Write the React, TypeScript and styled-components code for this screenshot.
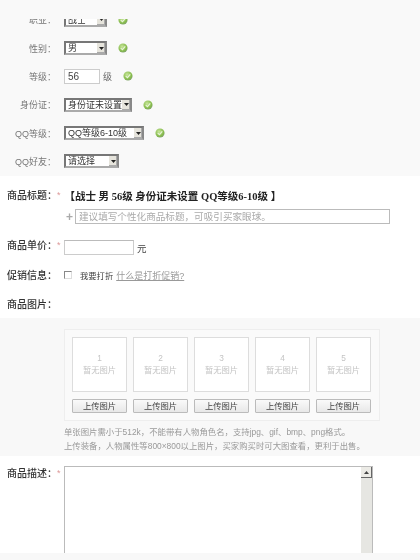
import styled, { createGlobalStyle } from "styled-components";

const GlobalStyle = createGlobalStyle`
    html, body {
        margin: 0;
        padding: 0;
        background: #ffffff;
    }
    body {
        font-family: "Liberation Sans", "Noto Sans CJK SC", sans-serif;
    }
`;

function Check() {
    return (
        <CheckIcon width="10" height="10" viewBox="0 0 11 11">
            <defs>
                <radialGradient id="ok" cx="40%" cy="35%" r="70%">
                    <stop offset="0%" stopColor="#c8e69a" />
                    <stop offset="70%" stopColor="#86bb4c" />
                    <stop offset="100%" stopColor="#7f9f70" />
                </radialGradient>
            </defs>
            <circle cx="5.5" cy="5.5" r="5" fill="url(#ok)" />
            <path d="M3 5.6 L4.9 7.4 L8 3.8" fill="none" stroke="#e8f4d8" strokeWidth="1.3" />
        </CheckIcon>
    );
}

function Select({ width, value }: { width: number; value: string }) {
    return (
        <SelectBox $width={width}>
            <SelectText>{value}</SelectText>
            <SelectArrow>
                <svg width="5" height="3" viewBox="0 0 5 3">
                    <path d="M0 0 H5 L2.5 3 Z" fill="#222" />
                </svg>
            </SelectArrow>
        </SelectBox>
    );
}

const tiles = ["1", "2", "3", "4", "5"];

function App() {
    return (
        <Page>
            <GlobalStyle />
            <TopPanel>
                {/* the first row is cut by the top of the panel in the shot */}
                <ClippedRow>
                    <AttrRow>
                        <AttrLabel>职业：</AttrLabel>
                        <Select width={43} value="战士" />
                        <Check />
                    </AttrRow>
                </ClippedRow>
                <AttrRow>
                    <AttrLabel>性别：</AttrLabel>
                    <Select width={43} value="男" />
                    <Check />
                </AttrRow>
                <AttrRow>
                    <AttrLabel>等级：</AttrLabel>
                    <LevelInput>56</LevelInput>
                    <Unit>级</Unit>
                    <Check />
                </AttrRow>
                <AttrRow>
                    <AttrLabel>身份证：</AttrLabel>
                    <Select width={68} value="身份证未设置" />
                    <Check />
                </AttrRow>
                <AttrRow>
                    <AttrLabel>QQ等级：</AttrLabel>
                    <Select width={80} value="QQ等级6-10级" />
                    <Check />
                </AttrRow>
                <AttrRow>
                    <AttrLabel>QQ好友：</AttrLabel>
                    <Select width={55} value="请选择" />
                </AttrRow>
            </TopPanel>

            <FormPanel>
                <TitleRow>
                    <FieldLabel>商品标题：</FieldLabel>
                    <Star>*</Star>
                    <GoodsTitle>【战士 男 56级 身份证未设置 QQ等级6-10级 】</GoodsTitle>
                </TitleRow>
                <TitleInputRow>
                    <Plus>+</Plus>
                    <TitleInput>建议填写个性化商品标题，可吸引买家眼球。</TitleInput>
                </TitleInputRow>
                <PriceRow>
                    <FieldLabel>商品单价：</FieldLabel>
                    <Star>*</Star>
                    <PriceInput />
                    <Yuan>元</Yuan>
                </PriceRow>
                <PromoRow>
                    <FieldLabel>促销信息：</FieldLabel>
                    <CheckBox />
                    <PromoText>我要打折</PromoText>
                    <PromoLink>什么是打折促销?</PromoLink>
                </PromoRow>
                <PictureRow>
                    <FieldLabel>商品图片：</FieldLabel>
                </PictureRow>
            </FormPanel>

            <PicturePanel>
                <TileBoard>
                    {tiles.map((n) => (
                        <TileColumn key={n}>
                            <Tile>
                                <span>{n}</span>
                                <span>暂无图片</span>
                            </Tile>
                            <UploadButton>上传图片</UploadButton>
                        </TileColumn>
                    ))}
                </TileBoard>
                <Note>单张图片需小于512k，不能带有人物角色名，支持jpg、gif、bmp、png格式。</Note>
                <Note>上传装备，人物属性等800×800以上图片，买家购买时可大图查看，更利于出售。</Note>
            </PicturePanel>

            <DescPanel>
                <DescLabelColumn>
                    <FieldLabel>商品描述：</FieldLabel>
                    <Star>*</Star>
                </DescLabelColumn>
                <DescArea>
                    <ScrollTrack>
                        <ScrollButton>
                            <svg width="5" height="3" viewBox="0 0 5 3">
                                <path d="M0 3 H5 L2.5 0 Z" fill="#444" />
                            </svg>
                        </ScrollButton>
                    </ScrollTrack>
                </DescArea>
            </DescPanel>
            <BottomStrip />
        </Page>
    );
}

const Page = styled.div`
    width: 420px;
    height: 560px;
    overflow: hidden;
    display: flex;
    flex-direction: column;
    filter: blur(0.5px);
`;

const TopPanel = styled.div`
    height: 176px;
    flex: none;
    background: #f9f9f9;
    overflow: hidden;
    display: flex;
    flex-direction: column;
    padding-top: 19px;
    box-sizing: border-box;
`;

const ClippedRow = styled.div`
    flex: none;
    height: 15px;
    overflow: hidden;
    display: flex;
    flex-direction: column;
    justify-content: flex-end;
`;

const AttrRow = styled.div`
    flex: none;
    height: 28.3px;
    display: flex;
    align-items: center;
`;

const AttrLabel = styled.div`
    width: 56px;
    margin-right: 8px;
    text-align: right;
    font-size: 9px;
    color: #777;
    white-space: nowrap;
`;

const SelectBox = styled.div<{ $width: number }>`
    width: ${(p) => p.$width}px;
    height: 14px;
    box-sizing: border-box;
    border: 2px solid #777;
    border-right-color: #888;
    border-bottom-color: #aaa;
    background: #fff;
    display: flex;
    align-items: center;
    justify-content: space-between;
`;

const SelectText = styled.span`
    font-size: 9px;
    line-height: 10px;
    color: #333;
    padding-left: 2px;
    white-space: nowrap;
    overflow: hidden;
`;

const SelectArrow = styled.span`
    flex: none;
    width: 8px;
    height: 10px;
    background: #e6e4dc;
    display: flex;
    align-items: center;
    justify-content: center;
    box-shadow: inset -1px -1px 0 #aaa;
`;

const CheckIcon = styled.svg`
    margin-left: 11px;
    flex: none;
`;

const LevelInput = styled.div`
    width: 36px;
    height: 15px;
    box-sizing: border-box;
    border: 1px solid #ccc;
    background: #fff;
    font-size: 10px;
    line-height: 13px;
    color: #444;
    padding-left: 3px;
`;

const Unit = styled.span`
    font-size: 9px;
    color: #666;
    margin-left: 3px;
`;

const FormPanel = styled.div`
    height: 142px;
    flex: none;
    background: #fff;
    padding-left: 7px;
    box-sizing: border-box;
    padding-top: 12px;
    display: flex;
    flex-direction: column;
`;

const TitleRow = styled.div`
    height: 15px;
    display: flex;
    align-items: center;
`;

const FieldLabel = styled.span`
    flex: none;
    width: 50px;
    font-size: 10px;
    line-height: 11px;
    font-weight: 500;
    color: #333;
    white-space: nowrap;
`;

const Star = styled.span`
    flex: none;
    width: 7px;
    font-size: 9px;
    line-height: 11px;
    color: #d99;
`;

const GoodsTitle = styled.span`
    font-family: "Liberation Serif", "Noto Sans CJK SC", serif;
    font-size: 10.5px;
    font-weight: 700;
    color: #222;
    margin-left: 0.5px;
    white-space: nowrap;
`;

const TitleInputRow = styled.div`
    margin-top: 6px;
    padding-left: 59px;
    display: flex;
    align-items: center;
    height: 15px;
`;

const Plus = styled.span`
    width: 9px;
    font-size: 12px;
    font-weight: 700;
    color: #aaa;
`;

const TitleInput = styled.div`
    width: 315px;
    height: 15px;
    box-sizing: border-box;
    border: 1px solid #bbb;
    font-size: 9.6px;
    line-height: 13px;
    color: #aaa;
    padding-left: 3px;
    white-space: nowrap;
`;

const PriceRow = styled.div`
    margin-top: 16px;
    height: 15px;
    display: flex;
    align-items: flex-start;
`;

const PriceInput = styled.div`
    width: 70px;
    height: 15px;
    box-sizing: border-box;
    border: 1px solid #ccc;
    border-top-color: #bbb;
    background: #fff;
`;

const Yuan = styled.span`
    margin-left: 3px;
    align-self: center;
    font-size: 9.5px;
    color: #444;
`;

const PromoRow = styled.div`
    margin-top: 13px;
    height: 14px;
    display: flex;
    align-items: center;
`;

const CheckBox = styled.span`
    flex: none;
    width: 8px;
    height: 8px;
    margin-left: 7px;
    border: 1px solid #888;
    border-right-color: #ddd;
    border-bottom-color: #ddd;
    box-sizing: border-box;
    background: #fff;
`;

const PromoText = styled.span`
    margin-left: 8px;
    font-size: 8.3px;
    color: #444;
`;

const PromoLink = styled.span`
    margin-left: 3px;
    font-size: 9px;
    color: #999;
    text-decoration: underline;
`;

const PictureRow = styled.div`
    margin-top: 15px;
    height: 15px;
    display: flex;
    align-items: center;
`;

const PicturePanel = styled.div`
    height: 138px;
    flex: none;
    background: #f8f8f8;
    padding: 11px 0 0 64px;
    box-sizing: border-box;
`;

const TileBoard = styled.div`
    width: 316px;
    height: 92px;
    box-sizing: border-box;
    padding: 7px;
    background: #fafafa;
    border: 1px solid #eee;
    display: flex;
    gap: 6px;
    margin-bottom: 4px;
`;

const TileColumn = styled.div`
    width: 55px;
    display: flex;
    flex-direction: column;
    gap: 7px;
`;

const Tile = styled.div`
    height: 55px;
    box-sizing: border-box;
    padding-bottom: 2px;
    background: #fff;
    border: 1px solid #ddd;
    display: flex;
    flex-direction: column;
    align-items: center;
    justify-content: center;
    font-size: 8.3px;
    line-height: 12px;
    color: #c4c4c4;
`;

const UploadButton = styled.div`
    height: 14px;
    box-sizing: border-box;
    border: 1px solid #bbb;
    border-radius: 1px;
    background: linear-gradient(#fafafa, #e8e8e8);
    font-size: 8.3px;
    line-height: 12px;
    text-align: center;
    color: #444;
`;

const Note = styled.div`
    font-size: 8.4px;
    line-height: 14px;
    color: #999;
    white-space: nowrap;
`;

const DescPanel = styled.div`
    height: 97px;
    flex: none;
    background: #fff;
    padding: 10px 0 0 7px;
    box-sizing: border-box;
    display: flex;
`;

const DescLabelColumn = styled.div`
    display: flex;
    align-items: center;
    height: 15px;
`;

const DescArea = styled.div`
    width: 309px;
    height: 87px;
    box-sizing: border-box;
    border: 1px solid #bbb;
    border-bottom: none;
    background: #fff;
    display: flex;
    justify-content: flex-end;
`;

const ScrollTrack = styled.div`
    width: 11px;
    background: #e6e6e2;
`;

const ScrollButton = styled.div`
    height: 11px;
    box-sizing: border-box;
    background: #ecebe6;
    border-right: 1px solid #666;
    border-bottom: 1px solid #666;
    display: flex;
    align-items: center;
    justify-content: center;
`;

const BottomStrip = styled.div`
    flex: 1;
    background: #f8f8f8;
`;

export default App;
